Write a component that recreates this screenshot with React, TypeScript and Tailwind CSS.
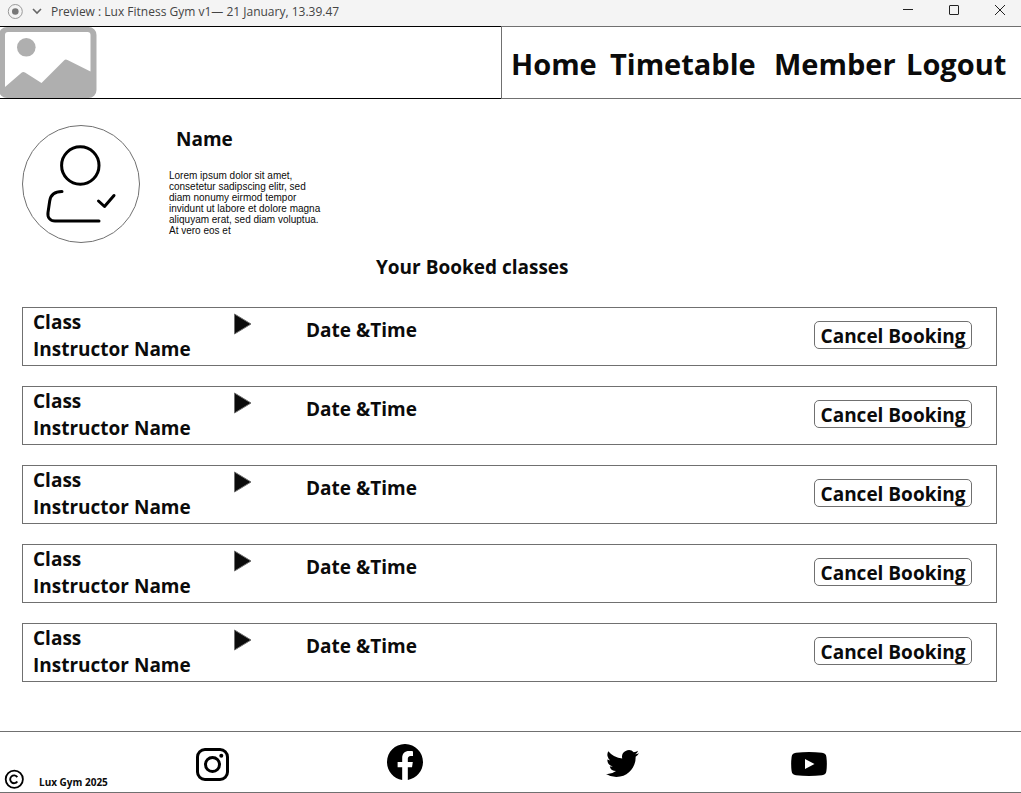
import { BsFacebook, BsTwitter } from "react-icons/bs";

const bookings = [1, 2, 3, 4, 5];

function TitleBar() {
  return (
    <header className="flex h-[26px] items-start justify-between bg-[#f4f4f4] text-[#444444]">
      <div className="flex items-center pl-[7px]">
        <svg className="h-[22px] w-4" viewBox="0 0 16 22" aria-hidden="true">
          <circle cx="8.3" cy="10.5" r="7" fill="none" stroke="#999999" />
          <circle cx="8.3" cy="10.5" r="3.3" fill="#777777" />
        </svg>
        <svg className="ml-2 h-[22px] w-3" viewBox="0 0 12 22" fill="none" stroke="#666666" strokeWidth="1.6" aria-hidden="true">
          <path d="M2 8l4 4 4-4" />
        </svg>
        <h1 className="ml-2 text-[12px] font-normal leading-6">Preview : Lux Fitness Gym v1— 21 January, 13.39.47</h1>
      </div>
      <div className="flex pr-[15px]">
        <button aria-label="Minimize" className="mr-9">
          <svg className="h-[20px] w-[11px]" viewBox="0 0 11 20" fill="none" stroke="#222222">
            <path d="M1 9.5h10" />
          </svg>
        </button>
        <button aria-label="Maximize" className="mr-[35px]">
          <svg className="h-[20px] w-[11px]" viewBox="0 0 11 20" fill="none" stroke="#222222">
            <rect x="0.5" y="5.5" width="9" height="9" rx="0.5" />
          </svg>
        </button>
        <button aria-label="Close">
          <svg className="h-[20px] w-[11px]" viewBox="0 0 11 20" fill="none" stroke="#222222">
            <path d="M0 5l10 10M10 5l-10 10" />
          </svg>
        </button>
      </div>
    </header>
  );
}

function ImagePlaceholder() {
  return (
    <svg className="h-[71px] w-[97px]" viewBox="0 0 97 71" role="img" aria-label="Logo">
      <rect x="-1" y="0" width="97.5" height="71" rx="8" fill="#afafaf" />
      <path d="M5 8q0-3 3-3h79.500q3 0 3 3v36.500L67.500 33q-2-1-3.500.500L41.500 56 25 45.500q-2-1-3.500.300L5 60z" fill="#ffffff" />
      <circle cx="26.300" cy="20.300" r="9.300" fill="#afafaf" />
    </svg>
  );
}

function Nav() {
  return (
    <div className="grid grid-cols-[501fr_520fr]">
      <div className="border-y border-black">
        <ImagePlaceholder />
      </div>
      <nav className="grid grid-cols-[99fr_164fr_132fr_115fr] items-center border border-r-0 border-[#707070] pl-[9px] pt-[2px] text-[29px] leading-10">
        <a href="#home">Home</a>
        <a href="#timetable">Timetable</a>
        <a href="#member">Member</a>
        <a href="#logout">Logout</a>
      </nav>
    </div>
  );
}

function Profile() {
  return (
    <section className="flex pl-[22px] pt-[26px]">
      <svg className="h-[118px] w-[118px]" viewBox="0 0 118 118" fill="none" role="img" aria-label="Member">
        <circle cx="59" cy="59" r="58.500" stroke="#707070" />
        <g stroke="#000000" strokeWidth="3" strokeLinecap="round" strokeLinejoin="round">
          <circle cx="58.300" cy="40.500" r="18.700" />
          <path d="M40 66.500c-7.500 0-11.500 4-12.300 9.500L26 87.500c-.8 5 2.200 8.500 7 8.500h44" />
          <path d="M76.500 76l6 5.500L92 70.500" />
        </g>
      </svg>
      <div className="ml-[29px]">
        <h2 className="pl-[7px] leading-7">Name</h2>
        <p className="mt-[17px] w-[156px] font-['Liberation_Sans',sans-serif] text-[10px] font-normal leading-[11px]">
          Lorem ipsum dolor sit amet, consetetur sadipscing elitr, sed diam nonumy eirmod tempor invidunt ut labore et dolore magna aliquyam erat, sed diam voluptua. At vero eos et
        </p>
      </div>
    </section>
  );
}

function BookingRow() {
  return (
    <li className="flex h-[59px] items-start border border-[#707070] pl-[10px] pr-6">
      <div className="w-[200px] pt-px leading-[27px]">
        <h3>Class</h3>
        <p>Instructor Name</p>
      </div>
      <svg className="mt-[5px] h-[22px] w-[19px]" viewBox="0 0 19 22" aria-hidden="true">
        <path d="M1.500 1v20L18 11z" fill="#0b0b0b" stroke="#707070" />
      </svg>
      <p className="ml-[54px] mt-2 leading-7">Date &amp;Time</p>
      <button className="ml-auto mt-[13px] flex h-7 w-[158px] items-center justify-center whitespace-nowrap rounded-[5px] border border-[#707070] pt-px leading-[26px]">
        Cancel Booking
      </button>
    </li>
  );
}

function Footer() {
  return (
    <footer className="flex h-[62px] border-y border-[#707070]">
      <div className="flex w-[19.2%] items-end pb-[3px] pl-1">
        <svg className="h-5 w-5" viewBox="0 0 20 20" fill="none" stroke="#000000" aria-hidden="true">
          <circle cx="10.300" cy="10.300" r="8.600" strokeWidth="1.800" />
          <path d="M13.300 8.100a3.900 3.900 0 1 0 0 4.400" strokeWidth="1.900" />
        </svg>
        <p className="ml-[15px] text-[10px] leading-[14px]">Lux Gym 2025</p>
      </div>
      <nav aria-label="Social media" className="grid flex-1 grid-cols-[191fr_219fr_185fr_230fr] items-center text-black">
        <a href="#instagram" aria-label="Instagram" className="pt-1">
          <svg className="h-[33px] w-[33px]" viewBox="0 0 33 33" fill="none" stroke="#000000" strokeWidth="3">
            <rect x="1.500" y="1.500" width="30" height="30" rx="7.500" />
            <circle cx="16.500" cy="16.500" r="7" />
            <circle cx="25.300" cy="7.800" r="2" fill="#000000" stroke="none" />
          </svg>
        </a>
        <a href="#facebook" aria-label="Facebook">
          <BsFacebook className="h-9 w-9" />
        </a>
        <a href="#twitter" aria-label="Twitter">
          <BsTwitter className="h-[33px] w-[33px]" />
        </a>
        <a href="#youtube" aria-label="YouTube" className="pt-1">
          <svg className="h-6 w-9" viewBox="0 0 36 24">
            <path d="M5 .8Q18-.8 31 .8q4 .4 4.400 4.200.9 7 0 14-.4 3.800-4.400 4.200-13 1.600-26 0-4-.4-4.400-4.200-.9-7 0-14Q1 1.200 5 .8zM14 7v10l9.500-5z" fill="#000000" fillRule="evenodd" />
          </svg>
        </a>
      </nav>
    </footer>
  );
}

export default function App() {
  return (
    <div className="flex min-h-screen flex-col bg-white font-['Open_Sans',sans-serif] text-[19px] font-bold text-[#0b0b0b]">
      <TitleBar />
      <Nav />
      <main className="flex-1">
        <Profile />
        <h2 className="pl-[376px] pt-[10px] leading-7">Your Booked classes</h2>
        <ul className="mb-12 ml-[22px] mr-6 mt-[26px] flex flex-col gap-5">
          {bookings.map((id) => (
            <BookingRow key={id} />
          ))}
        </ul>
      </main>
      <Footer />
    </div>
  );
}
